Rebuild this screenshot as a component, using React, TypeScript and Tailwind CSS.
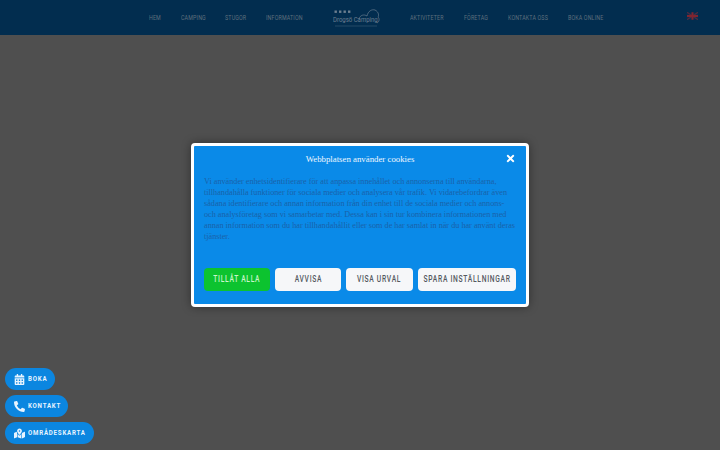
import React from 'react';
import { FaCalendarAlt, FaPhoneAlt, FaMapMarkedAlt, FaTimes } from 'react-icons/fa';

const leftNav = [
    { label: 'HEM', width: 'w-[12px]' },
    { label: 'CAMPING', width: 'w-[24px]' },
    { label: 'STUGOR', width: 'w-[21px]' },
    { label: 'INFORMATION', width: 'w-[36px]' },
];
const rightNav = [
    { label: 'AKTIVITETER', width: 'w-[34px]' },
    { label: 'FÖRETAG', width: 'w-[24px]' },
    { label: 'KONTAKTA OSS', width: 'w-[40px]' },
    { label: 'BOKA ONLINE', width: 'w-[34px]' },
];

const bodyLines = [
    'Vi använder enhetsidentifierare för att anpassa innehållet och annonserna till användarna,',
    'tillhandahålla funktioner för sociala medier och analysera vår trafik. Vi vidarebefordrar även',
    'sådana identifierare och annan information från din enhet till de sociala medier och annons-',
    'och analysföretag som vi samarbetar med. Dessa kan i sin tur kombinera informationen med',
    'annan information som du har tillhandahållit eller som de har samlat in när du har använt deras',
    'tjänster.',
];

function Logo() {
    return (
        <div className="relative w-[48px] h-[28px]">
            <svg viewBox="0 0 48 28" className="absolute inset-0 w-full h-full" fill="none" stroke="#5d7488" strokeWidth="0.8">
                <path d="M26 15c1-4 5-5 8-3 1-5 5-7 8-6 4 2 4 6 3 7 2 2 1 5-1 6" />
                <path d="M2 22h42" strokeOpacity="0.5" />
                <g fill="#6c7f8f" stroke="none">
                    <rect x="1.5" y="6.5" width="2.4" height="2.4" />
                    <rect x="6" y="6.5" width="2.4" height="2.4" />
                    <rect x="10.5" y="6.5" width="2.4" height="2.4" />
                    <rect x="15" y="6.5" width="2.4" height="2.4" />
                </g>
            </svg>
            <span className="absolute left-0 top-[11px] origin-left scale-x-[0.75] whitespace-nowrap text-[8px] leading-[10px] text-[#6c7f8f]">
                Drogsö Camping
            </span>
        </div>
    );
}

function NavItem({ label, width }: { label: string; width: string }) {
    return (
        <a className={`${width} block`}>
            <span className="block origin-left scale-x-[0.76] text-[7px] leading-[10px] tracking-[0.2px] text-[#5f6f7d] whitespace-nowrap">
                {label}
            </span>
        </a>
    );
}

function ConsentButton({ label, green, width }: { label: string; green?: boolean; width: string }) {
    return (
        <button className={`${width} h-[23px] rounded-[4px] flex items-center justify-center ${green ? 'bg-[#0cc32f] text-[#c9f5c9]' : 'bg-[#f6f7f9] text-[#54595f]'}`}>
            <span className="shrink-0 scale-x-[0.79] text-[8.5px] font-medium tracking-[0.9px] whitespace-nowrap">{label}</span>
        </button>
    );
}

function FloatButton({ label, icon, width }: { label: string; icon: React.ReactNode; width: string }) {
    return (
        <a className={`${width} h-[22px] pl-[9px] rounded-full bg-[#0b86e0] text-[#e8f4ff] flex items-center gap-[3px]`}>
            {icon}
            <span className="shrink-0 origin-left scale-x-[0.77] text-[8px] font-bold tracking-[1px] whitespace-nowrap">{label}</span>
        </a>
    );
}

export default function App() {
    return (
        <div className="relative w-[720px] h-[450px] overflow-hidden bg-[#4f4f4f] font-['Roboto',sans-serif]">
            <header className="h-[35px] bg-[#022d4f] flex items-center">
                <nav className="ml-[149px] flex items-center gap-[20px] h-full pt-[1px]">
                    {leftNav.map((item) => (
                        <NavItem key={item.label} label={item.label} width={item.width} />
                    ))}
                </nav>
                <div className="ml-[31px]">
                    <Logo />
                </div>
                <nav className="ml-[29px] flex items-center gap-[20px] h-full pt-[1px]">
                    {rightNav.map((item) => (
                        <NavItem key={item.label} label={item.label} width={item.width} />
                    ))}
                </nav>
                <svg viewBox="0 0 12 8" className="ml-[85px] -mt-[4px] w-[11px] h-[8px]">
                    <rect width="12" height="8" fill="#0c2f50" />
                    <path d="M0 0l12 8M12 0L0 8" stroke="#4f2c42" strokeWidth="1.4" />
                    <path d="M6 0v8M0 4h12" stroke="#7f2530" strokeWidth="2.2" />
                </svg>
            </header>

            {/* cookie modal */}
            <div className="absolute left-[191px] top-[143px] w-[338px] h-[164px] bg-[#0a8ae8] border-[3px] border-white rounded-[4px] shadow-[0_0_10px_rgba(0,0,0,0.4)] flex flex-col">
                <div className="relative h-[27px] flex items-center justify-center text-[8.8px] text-[#eef7ff] font-['Liberation_Serif',serif]">
                    Webbplatsen använder cookies
                    <FaTimes className="absolute right-[10px] top-[7px] w-[11px] h-[11px] text-white" />
                </div>
                <div className="mt-[3px] px-[10px] text-[8.2px] leading-[11px] text-[#1a62a8] whitespace-nowrap font-['Liberation_Serif',serif]">
                    {bodyLines.map((line) => (
                        <div key={line}>{line}</div>
                    ))}
                </div>
                <div className="mt-auto mb-[13px] pl-[10px] flex gap-[5px]">
                    <ConsentButton label="TILLÅT ALLA" green width="w-[66px]" />
                    <ConsentButton label="AVVISA" width="w-[66px]" />
                    <ConsentButton label="VISA URVAL" width="w-[67px]" />
                    <ConsentButton label="SPARA INSTÄLLNINGAR" width="w-[98px]" />
                </div>
            </div>

            <div className="absolute left-[5px] top-[368px] flex flex-col gap-[5px]">
                <FloatButton label="BOKA" width="w-[50px]" icon={<FaCalendarAlt className="shrink-0 w-[11px] h-[11px]" />} />
                <FloatButton label="KONTAKT" width="w-[63px]" icon={<FaPhoneAlt className="shrink-0 w-[11px] h-[11px]" />} />
                <FloatButton label="OMRÅDESKARTA" width="w-[89px]" icon={<FaMapMarkedAlt className="shrink-0 w-[11px] h-[11px]" />} />
            </div>
        </div>
    );
}
